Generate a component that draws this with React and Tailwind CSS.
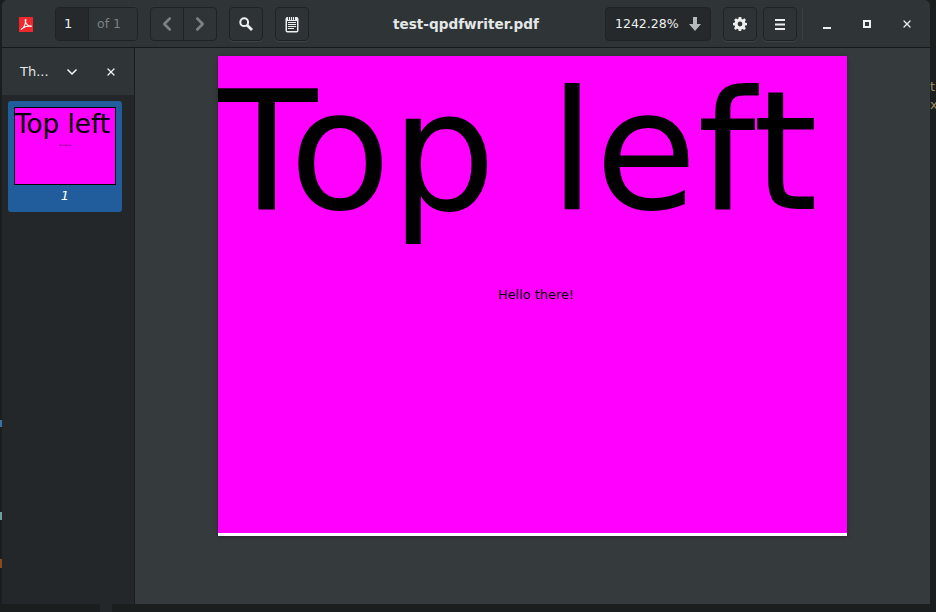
import React from 'react';
import { ChevronLeft, ChevronRight, ChevronDown, X } from 'lucide-react';

const FONT = "font-['DejaVu_Sans',sans-serif]";

const PdfIcon = () => (
  <svg width="14" height="15" viewBox="0 0 14 15">
    <rect width="14" height="15" fill="#f0282d" rx="0.5" />
    <path d="M2 12.5 C4.5 11 6.5 7 6.8 3.2 C7 2 6 2.5 6.2 3.8 C6.6 6.5 9 9.2 12 9.4 C12.6 9.2 12 8.6 11 8.7 C8 8.9 4.8 9.8 2.6 11.8 Z" fill="none" stroke="#fff" strokeWidth="1.1" />
  </svg>
);

const SearchIcon = () => (
  <svg width="16" height="16" viewBox="0 0 16 16" fill="none" stroke="#eef0f0">
    <circle cx="6.2" cy="6.2" r="3.9" strokeWidth="2" />
    <path d="M9.2 9.2 L14 14" strokeWidth="2.8" />
  </svg>
);

const NotesIcon = () => (
  <svg width="14" height="17" viewBox="0 0 14 17">
    <path d="M0.5 3 a2 2 0 0 1 2-2 h9 a2 2 0 0 1 2 2 v11.5 a2 2 0 0 1-2 2 h-9 a2 2 0 0 1-2-2 z" fill="#eef0f0" />
    <path d="M3.5 0v4M5.5 0v4M7.5 0v4M9.5 0v4" stroke="#2e3336" strokeWidth="0.9" />
    <rect x="2" y="5" width="10" height="10" fill="#2e3336" />
    <path d="M3 6.5h8M3 8.5h8M3 10.5h8M3 12.5h6" stroke="#eef0f0" strokeWidth="1" />
  </svg>
);

const GearIcon = () => (
  <svg width="14" height="14" viewBox="0 0 14 14" fill="#eef0f0">
    <path fillRule="evenodd" d="M5.7 0h2.6l.3 1.9 1.1.5L11.3 1.2 13 3l-1.2 1.6.5 1.1 1.7.3v2.2l-1.8.4-.4 1.1 1.1 1.6-1.7 1.7-1.6-1.1-1.1.4-.3 1.7H5.7l-.4-1.8-1.1-.4-1.5 1.1L1 11.2l1.1-1.5-.5-1.1L0 8.2V5.9l1.7-.3.5-1.1L1.1 3l1.8-1.8 1.4 1.1 1.1-.5z M7 4.6a2.4 2.4 0 1 0 0 4.8a2.4 2.4 0 1 0 0-4.8z" />
  </svg>
);

const ToolButton = ({ children }) => (
  <button className="flex h-[34px] w-[34px] items-center justify-center rounded-[4px] border border-[#1f2325] bg-[#2e3336] shadow-[0_1px_0_#3c4245]">
    {children}
  </button>
);

const Thumbnail = () => (
  <div className="ml-[6px] mt-[6px] h-[111px] w-[114px] rounded-[3px] bg-[#215d9c] pt-[6px]">
    <div className="mx-auto h-[78px] w-[102px] overflow-hidden border border-black bg-[#ff00ff]">
      <p className="whitespace-nowrap text-[26.2px] leading-[33px] text-black">Top left</p>
      <p className="ml-[44px] mt-[3px] whitespace-nowrap text-[2.1px] leading-[3px] text-black">Hello there!</p>
    </div>
    <p className="mt-[3px] text-center text-[13px] italic leading-4 text-white">1</p>
  </div>
);

export default function App() {
  return (
    <div className={`flex h-[612px] w-[936px] overflow-hidden bg-[#1a1e1f] ${FONT}`}>
      {/* desktop behind the window: bits of other windows at the edges */}
      <div className="flex w-[2px] flex-col">
        <div className="mt-[420px] h-[7px] bg-[#3f6f9f]" />
        <div className="mt-[85px] h-[8px] bg-[#6f9f9a]" />
        <div className="mt-[39px] h-[9px] bg-[#8a4a20]" />
      </div>

      <div className="w-[928px]">
        <div className="flex h-[604px] flex-col overflow-hidden rounded-t-[6px] bg-[#353a3d]">
          {/* header */}
          <header className="flex h-[48px] flex-none items-center border-b border-[#17191a] bg-[#2f3437] pt-px text-[#eef0f0]">
            <div className="flex w-[46px] justify-center pl-[1px]">
              <PdfIcon />
            </div>
            <div className="ml-[7px] flex h-[34px] w-[83px] overflow-hidden rounded-[4px] border border-[#1f2325] text-[13px]">
              <div className="flex w-[33px] items-center border-r border-[#1f2325] bg-[#25292b] pl-[8px]">1</div>
              <div className="flex flex-1 items-center bg-[#2e3336] pl-[8px] text-[12.5px] text-[#7d8284]">of 1</div>
            </div>
            <div className="ml-[12px] flex h-[34px] w-[67px] overflow-hidden rounded-[4px] border border-[#1f2325]">
              <div className="flex flex-1 items-center justify-center border-r border-[#1f2325]">
                <ChevronLeft size={22} strokeWidth={2.8} color="#7d8284" />
              </div>
              <div className="flex flex-1 items-center justify-center">
                <ChevronRight size={22} strokeWidth={2.8} color="#7d8284" />
              </div>
            </div>
            <div className="ml-[12px]"><ToolButton><SearchIcon /></ToolButton></div>
            <div className="ml-[12px]"><ToolButton><NotesIcon /></ToolButton></div>
            <div className="flex-1 pl-[18px] text-center text-[13.6px] font-bold text-[#e4e7e8]">test-qpdfwriter.pdf</div>
            <div className="flex h-[34px] w-[106px] items-center gap-[10px] rounded-[4px] border border-[#1f2325] bg-[#25292b] pl-[9px] text-[12.5px]">
              <span>1242.28%</span>
              <svg width="12" height="14" viewBox="0 0 12 14" fill="#b6b9ba">
                <path d="M4 0h4v7h4l-6 7-6-7h4z" />
              </svg>
            </div>
            <div className="ml-[12px]"><ToolButton><GearIcon /></ToolButton></div>
            <div className="ml-[6px]">
              <ToolButton>
                <svg width="10" height="11" viewBox="0 0 10 11" fill="#eef0f0">
                  <path d="M0 0h10v2H0zM0 4.5h10v2H0zM0 9h10v2H0z" />
                </svg>
              </ToolButton>
            </div>
            <div className="ml-[5px] h-[34px] w-px bg-[#383d40]" />
            <div className="ml-[4px] flex w-[40px] justify-center pt-[8px]">
              <div className="h-[2px] w-[8px] bg-[#eef0f0]" />
            </div>
            <div className="flex w-[40px] justify-center">
              <div className="h-[8px] w-[8px] border-2 border-[#eef0f0]" />
            </div>
            <div className="flex w-[40px] justify-center">
              <X size={12} strokeWidth={2.5} color="#eef0f0" />
            </div>
            <div className="w-[3px]" />
          </header>

          <div className="flex min-h-0 flex-1">
            {/* sidebar */}
            <aside className="w-[133px] flex-none border-r border-[#1b1e1f] bg-[#232729]">
              <div className="flex h-[47px] items-center bg-[#2f3437] text-[13px] text-[#e4e7e8]">
                <span className="ml-[18px] w-[38px]">Th...</span>
                <ChevronDown size={16} strokeWidth={2.5} color="#eef0f0" className="ml-[6px]" />
                <X size={12} strokeWidth={2.5} color="#eef0f0" className="ml-[25px]" />
              </div>
              <Thumbnail />
            </aside>

            {/* document */}
            <main className="flex-1 pl-[83px] pt-[8px]">
              <div className="h-[480px] w-[629px] bg-white shadow-[0_1px_4px_rgba(0,0,0,0.3)]">
                <div className="h-[477px] overflow-hidden bg-[#ff00ff] text-black">
                  <p className="ml-[-2px] mt-[3px] whitespace-nowrap text-[166px] leading-[186px]">Top left</p>
                  <p className="ml-[280px] mt-[42px] text-[12.9px] leading-4">Hello there!</p>
                </div>
              </div>
            </main>
          </div>
        </div>
        <div className="ml-[98px] h-[8px] w-[12px] bg-[#232729]" />
      </div>

      <div className="w-[6px] pt-[78px] text-[13px] leading-[18px] text-[#a08a60]">
        <p>t</p>
        <p>x</p>
      </div>
    </div>
  );
}
